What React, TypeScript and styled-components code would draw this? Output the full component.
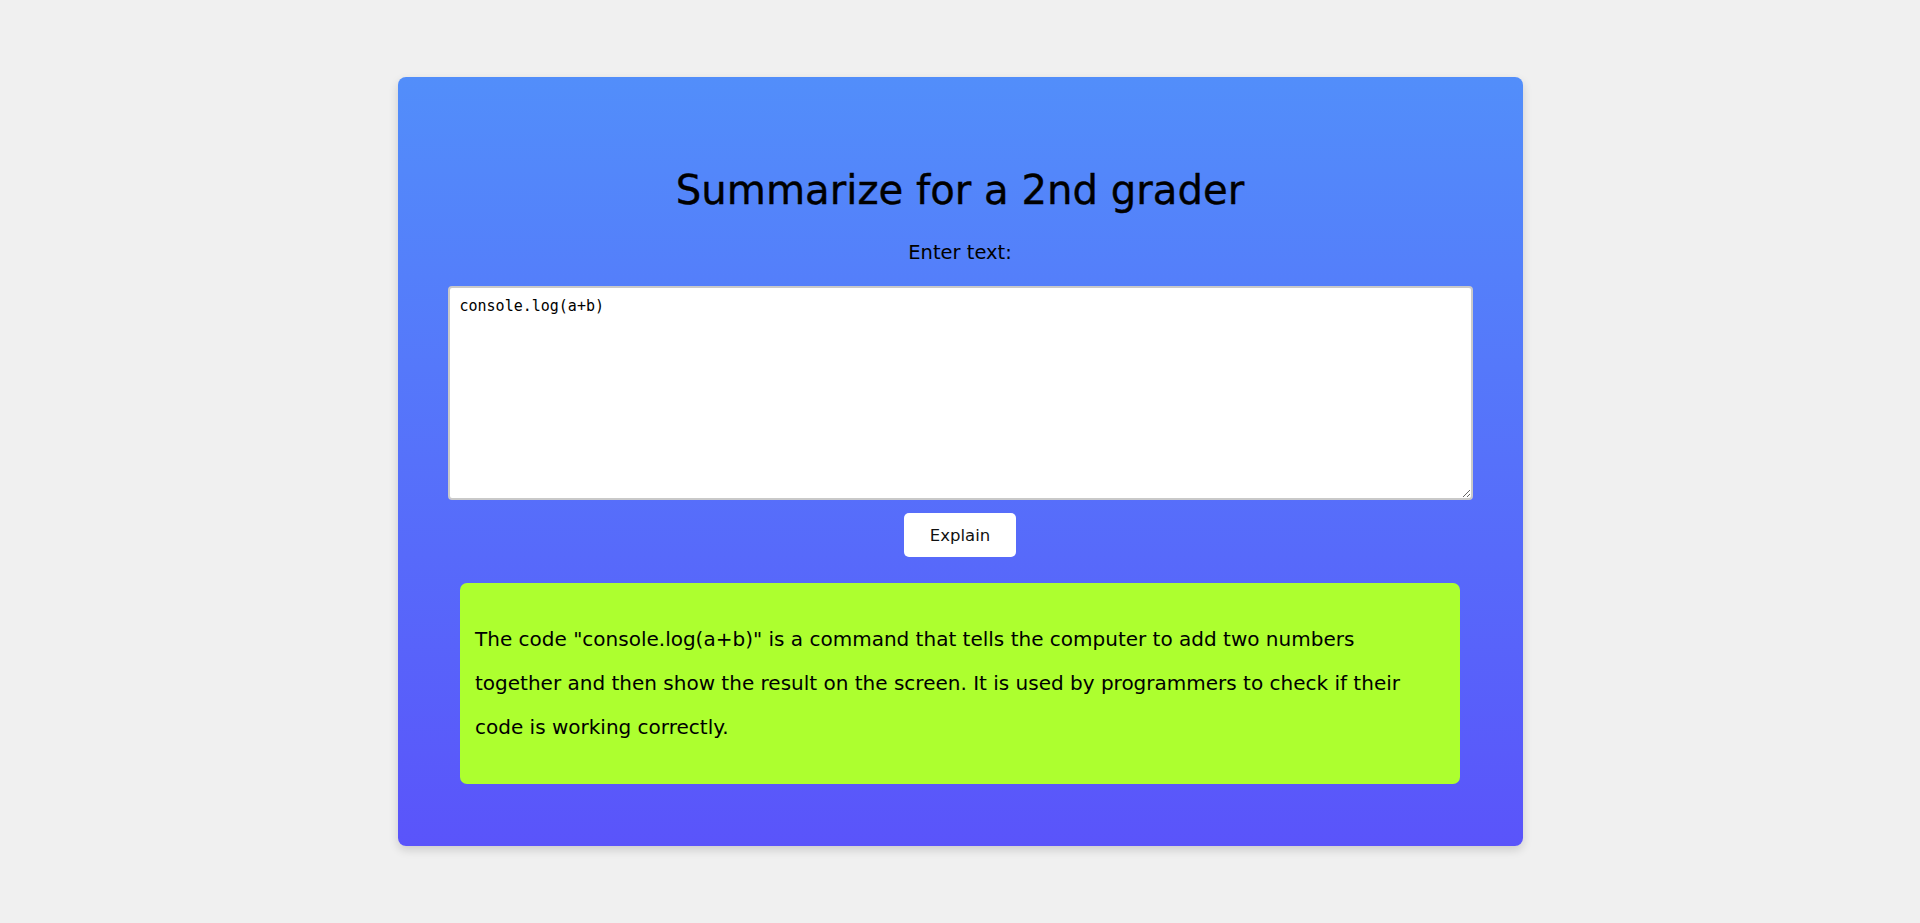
import React, { useState } from "react";
import styled, { createGlobalStyle } from "styled-components";

const Global = createGlobalStyle`
  html, body {
    margin: 0;
    padding: 0;
    background: #f0f0f0;
    font-family: "DejaVu Sans", "Noto Sans", sans-serif;
  }
  * { box-sizing: border-box; }
`;

const Page = styled.div`
  display: flex;
  justify-content: center;
  padding-top: 77px;
  min-height: 923px;
`;

const Card = styled.div`
  width: 1125px;
  height: 769px;
  border-radius: 8px;
  background: linear-gradient(to bottom, #528efa, #5a54fa);
  box-shadow: 0 4px 10px rgba(0, 0, 0, 0.15);
  display: flex;
  flex-direction: column;
  align-items: center;
  padding-top: 88px;
`;

const Title = styled.h1`
  margin: 0;
  font-size: 40.2px;
  line-height: 50px;
  font-weight: 500;
  color: #000;
  -webkit-text-stroke: 0.4px #000;
`;

const Label = styled.label`
  margin-top: 26px;
  font-size: 19.5px;
  line-height: 24px;
  color: #000;
`;

const Input = styled.textarea`
  margin-top: 21px;
  width: 1025px;
  height: 214px;
  border: 2px solid #c9c9c9;
  border-radius: 4px;
  background: #fff;
  padding: 9px 10px;
  font-family: "DejaVu Sans Mono", "Liberation Mono", monospace;
  font-size: 15px;
  line-height: 19px;
  color: #000;
  resize: both;
  outline: none;
`;

const Button = styled.button`
  margin-top: 13px;
  width: 112px;
  height: 44px;
  border: none;
  border-radius: 5px;
  background: #fff;
  font-family: "DejaVu Sans", sans-serif;
  font-size: 16.5px;
  color: #111;
  cursor: pointer;
`;

const Result = styled.div`
  margin-top: 26px;
  width: 1000px;
  height: 201px;
  border-radius: 7px;
  background: #adff2f;
  padding: 34px 15px 0;
`;

const ResultText = styled.p`
  margin: 0;
  font-size: 20px;
  line-height: 44px;
  color: #000;
`;

export default function App() {
  const [text, setText] = useState("console.log(a+b)");
  return (
    <>
      <Global />
      <Page>
        <Card>
          <Title>Summarize for a 2nd grader</Title>
          <Label htmlFor="input">Enter text:</Label>
          <Input
            id="input"
            value={text}
            onChange={(e) => setText(e.target.value)}
          />
          <Button>Explain</Button>
          <Result>
            <ResultText>
              The code "console.log(a+b)" is a command that tells the computer to add two
              numbers together and then show the result on the screen. It is used by
              programmers to check if their code is working correctly.
            </ResultText>
          </Result>
        </Card>
      </Page>
    </>
  );
}
